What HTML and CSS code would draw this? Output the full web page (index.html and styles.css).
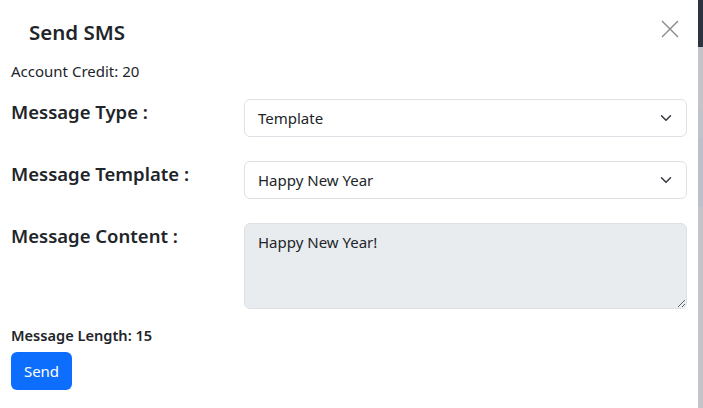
FILE: index.html
```html
<!DOCTYPE html>
<html lang="en">
<head>
<meta charset="utf-8">
<title>Send SMS</title>
<link rel="stylesheet" href="styles.css">
</head>
<body>
<div class="page">
  <div class="modal">
    <div class="modal-header">
      <h5 class="modal-title">Send SMS</h5>
      <button class="btn-close" type="button" aria-label="Close">
        <svg width="18" height="18" viewBox="0 0 18 18"><path d="M1 1L17 17M17 1L1 17" stroke="#8a8a8a" stroke-width="1.4" fill="none"/></svg>
      </button>
    </div>
    <div class="modal-body">
      <p class="credit">Account Credit: 20</p>
      <div class="form-grid">
        <label class="form-label">Message Type :</label>
        <div class="select">
          <span>Template</span>
          <svg class="chev" width="16" height="12" viewBox="0 0 16 16"><path d="M2 5l6 6 6-6" stroke="#343a40" stroke-width="2" fill="none" stroke-linecap="round" stroke-linejoin="round"/></svg>
        </div>
        <label class="form-label">Message Template :</label>
        <div class="select">
          <span>Happy New Year</span>
          <svg class="chev" width="16" height="12" viewBox="0 0 16 16"><path d="M2 5l6 6 6-6" stroke="#343a40" stroke-width="2" fill="none" stroke-linecap="round" stroke-linejoin="round"/></svg>
        </div>
        <label class="form-label">Message Content :</label>
        <textarea class="content" readonly>Happy New Year!</textarea>
      </div>
      <p class="length">Message Length: 15</p>
      <button class="btn-send" type="button">Send</button>
    </div>
  </div>
  <div class="page-edge">
    <div class="edge-nav"></div>
    <div class="edge-a"></div>
    <div class="edge-b"></div>
    <div class="edge-c"></div>
    <div class="edge-d"></div>
  </div>
</div>
</body>
</html>
```
FILE: styles.css
```css
* { box-sizing: border-box; }
html, body { margin: 0; padding: 0; }
body {
  font-family: "Noto Sans", "Open Sans", sans-serif;
  color: #212529;
  background: #fff;
}
.page {
  display: flex;
  width: 703px;
  height: 408px;
  overflow: hidden;
}
.modal {
  width: 698px;
  background: #fff;
}
.page-edge {
  width: 5px;
  display: flex;
  flex-direction: column;
}
.edge-nav { height: 47px; background: #2c3440; }
.edge-a { height: 61px; background: #c5c4c9; }
.edge-b { height: 30px; background: #c1c3cb; }
.edge-c { height: 69px; background: #bdc0c9; }
.edge-d { flex: 1; background: #c5c4c9; }

.modal-header {
  display: flex;
  justify-content: space-between;
  align-items: flex-start;
  padding: 20px 19px 0 29px;
}
.modal-title {
  margin: 0;
  font-size: 20.5px;
  font-weight: 600;
  line-height: 24px;
}
.btn-close {
  border: 0;
  background: none;
  padding: 0;
  width: 18px;
  height: 18px;
  display: block;
}
.btn-close svg { display: block; }

.modal-body {
  padding: 0 11px;
}
.credit {
  margin: 16px 0 0;
  font-size: 15px;
  line-height: 22px;
}
.form-grid {
  display: grid;
  grid-template-columns: 233px 443px;
  row-gap: 24px;
  margin-top: 17px;
}
.form-label {
  font-size: 18.5px;
  font-weight: 600;
  line-height: 22px;
  padding-top: 2px;
}
.select {
  height: 38px;
  border: 1px solid #dee2e6;
  border-radius: 6px;
  display: flex;
  align-items: center;
  justify-content: space-between;
  padding: 0 12px 0 13px;
  font-size: 15px;
  background: #fff;
}
.chev { display: block; }
.content {
  height: 86px;
  width: 443px;
  border: 1px solid #dee2e6;
  border-radius: 6px;
  background: #e9ecef;
  font-family: inherit;
  font-size: 15px;
  line-height: 22px;
  color: #212529;
  padding: 7px 13px 6px;
  margin: 0;
  resize: vertical;
  outline: none;
}
.length {
  margin: 15px 0 0;
  font-size: 14.6px;
  font-weight: 600;
  line-height: 22px;
}
.btn-send {
  margin-top: 6px;
  height: 38px;
  width: 61px;
  border: 0;
  border-radius: 6px;
  background: #0d6efd;
  color: #fff;
  font-family: inherit;
  font-size: 15px;
  padding: 0;
}
```
